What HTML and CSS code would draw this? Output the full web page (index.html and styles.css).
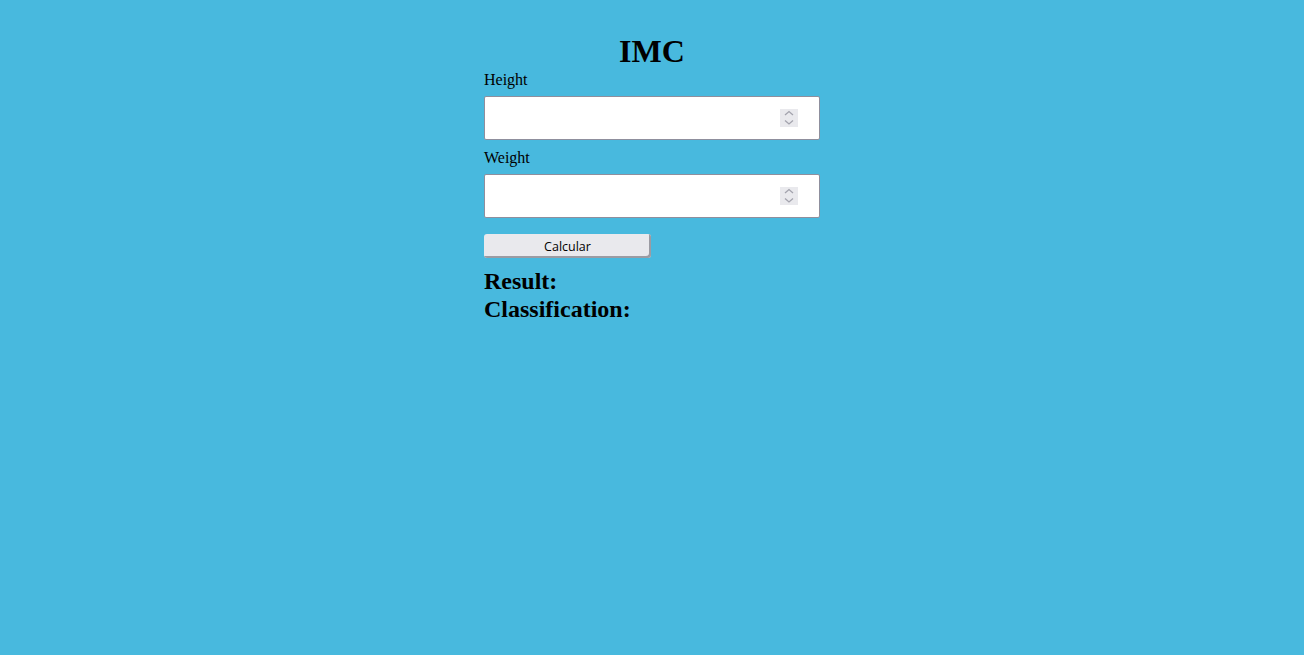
FILE: index.html
```html
<!DOCTYPE html>
<html lang="en">
<head>
<meta charset="utf-8">
<title>IMC</title>
<link rel="stylesheet" href="styles.css">
</head>
<body>
<main class="calc">
  <h1 class="title">IMC</h1>
  <label class="label" for="height">Height</label>
  <div class="field">
    <input class="input" id="height" type="text">
    <span class="spin"><svg width="18" height="18" viewBox="0 0 18 18"><path d="M5 6 9 2.5 13 6M5 11.5 9 15 13 11.5" fill="none" stroke="#a3a3ad" stroke-width="1.3"/></svg></span>
  </div>
  <label class="label" for="weight">Weight</label>
  <div class="field">
    <input class="input" id="weight" type="text">
    <span class="spin"><svg width="18" height="18" viewBox="0 0 18 18"><path d="M5 6 9 2.5 13 6M5 11.5 9 15 13 11.5" fill="none" stroke="#a3a3ad" stroke-width="1.3"/></svg></span>
  </div>
  <button class="btn" type="button">Calcular</button>
  <h2 class="out">Result:</h2>
  <h2 class="out">Classification:</h2>
</main>
</body>
</html>
```

FILE: styles.css
```css
html, body {
  margin: 0;
  padding: 0;
  background: #48b9de;
  height: 100%;
}
body {
  font-family: "Liberation Serif", "Times New Roman", serif;
  color: #000;
}
.calc {
  width: 336px;
  margin: 0 auto;
  padding-top: 33px;
  display: flex;
  flex-direction: column;
}
.title {
  margin: 0 0 1px;
  font-size: 32px;
  font-weight: bold;
  text-align: center;
}
.label {
  display: block;
  font-size: 16px;
  margin-bottom: 7px;
}
.field {
  position: relative;
  height: 44px;
  margin-bottom: 9px;
}
.input {
  box-sizing: border-box;
  width: 336px;
  height: 44px;
  margin: 0;
  border: 1px solid #8f8f9d;
  border-radius: 2px;
  background: #fff;
  outline: none;
  padding: 0 8px;
  font-size: 16px;
}
.spin {
  position: absolute;
  left: 296px;
  top: 13px;
  width: 18px;
  height: 18px;
  background: #e9e9ed;
  display: block;
}
.spin svg { display: block; }
.btn {
  margin-top: 7px;
  box-sizing: border-box;
  width: 167px;
  height: 24px;
  padding: 2px 0 0;
  border: none;
  border-radius: 3px;
  background: #e9e9ed;
  box-shadow: inset -2px -2px 0 #9b9ba3;
  font-family: "Open Sans", sans-serif;
  font-size: 12.5px;
  color: #000;
  line-height: 22px;
  text-align: center;
}
.out {
  margin: 0;
  font-size: 24px;
  font-weight: bold;
  line-height: 28px;
}
.btn + .out { margin-top: 9px; }
```
